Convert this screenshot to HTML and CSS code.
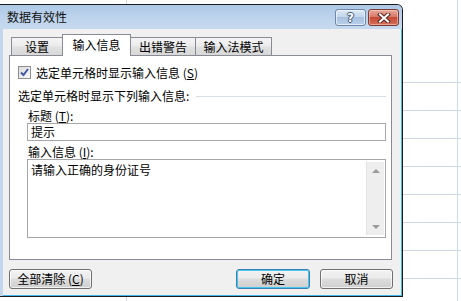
FILE: index.html
```html
<!DOCTYPE html>
<html lang="zh-CN">
<head>
<meta charset="utf-8">
<title>数据有效性</title>
<link rel="stylesheet" href="styles.css">
</head>
<body>
<div class="window">
  <div class="titlebar">
    <span class="title">数据有效性</span>
    <div class="caption-buttons">
      <span class="cap help"><span class="q">?</span></span>
      <span class="cap close">
        <svg width="14" height="10" viewBox="0 0 14 10">
          <path d="M3 1.5 L11 8.5 M11 1.5 L3 8.5" stroke="#5a2a24" stroke-width="4" stroke-linecap="square"/>
          <path d="M3 1.5 L11 8.5 M11 1.5 L3 8.5" stroke="#ffffff" stroke-width="2" stroke-linecap="square"/>
        </svg>
      </span>
    </div>
  </div>
  <div class="client">
    <div class="tabs">
      <div class="tab w1">设置</div>
      <div class="tab active w2">输入信息</div>
      <div class="tab w3">出错警告</div>
      <div class="tab w4">输入法模式</div>
    </div>
    <div class="panel">
      <div class="check-row">
        <span class="checkbox">
          <svg width="11" height="11" viewBox="0 0 11 11">
            <path d="M2 5.5 L4.5 8 L9 2" fill="none" stroke="#3d58a6" stroke-width="2"/>
          </svg>
        </span>
        <span>选定单元格时显示输入信息 (<u>S</u>)</span>
      </div>
      <div class="group-label"><span>选定单元格时显示下列输入信息:</span><span class="rule"></span></div>
      <div class="field-label">标题 (<u>T</u>):</div>
      <div class="input">提示</div>
      <div class="field-label second">输入信息 (<u>I</u>):</div>
      <div class="textarea">
        <div class="ta-text">请输入正确的身份证号</div>
        <div class="scrollbar">
          <span class="arrow up"></span>
          <span class="arrow down"></span>
        </div>
      </div>
    </div>
    <div class="buttons">
      <div class="btn clear">全部清除 (<u>C</u>)</div>
      <div class="spacer"></div>
      <div class="btn ok">确定</div>
      <div class="btn cancel">取消</div>
    </div>
  </div>
</div>
</body>
</html>
```
FILE: styles.css
```css
html, body {
  margin: 0;
  padding: 0;
}
body {
  width: 461px;
  height: 301px;
  overflow: hidden;
  font-family: "Noto Sans CJK SC", "Liberation Sans", sans-serif;
  font-size: 12px;
  color: #000;
  background-color: #fff;
  background-image:
    linear-gradient(to right, transparent 126px, #d0d7e5 126px, #d0d7e5 127px, transparent 127px, transparent 457px, #d0d7e5 457px, #d0d7e5 458px, transparent 458px),
    linear-gradient(to bottom, #fff 0, #fff 80px, transparent 80px),
    repeating-linear-gradient(to bottom, transparent 0, transparent 27px, #d0d7e5 27px, #d0d7e5 28px);
  background-position: 0 0, 0 0, 0 55px;
}
.window {
  margin-top: 4px;
  width: 402px;
  border: 1px solid #1c1c1c;
  border-left: 0;
  border-radius: 0 6px 0 0;
  background: #c2d7ee;
  overflow: hidden;
}
.titlebar {
  height: 24px;
  display: flex;
  align-items: flex-start;
  justify-content: space-between;
  background: linear-gradient(#aec8e6, #bcd3ec 50%, #c6daef);
}
.title {
  padding-left: 7px;
  line-height: 24px;
  font-size: 12px;
  color: #111;
}
.caption-buttons {
  display: flex;
  gap: 2px;
  margin-top: 4px;
  margin-right: 3px;
}
.cap {
  width: 31px;
  height: 17px;
  box-sizing: border-box;
  border-radius: 3px;
  display: flex;
  align-items: center;
  justify-content: center;
}
.help {
  border: 1px solid #6e86a8;
  background: linear-gradient(#dce8f5, #c4d6ec 45%, #a9c1e0 50%, #b9d0ea);
  box-shadow: inset 0 0 0 1px rgba(255,255,255,0.6);
}
.q {
  font-family: "DejaVu Sans", sans-serif;
  font-weight: bold;
  font-size: 12px;
  line-height: 12px;
  color: #fff;
  text-shadow: -1px 0 #3f5570, 1px 0 #3f5570, 0 -1px #3f5570, 0 1px #3f5570;
}
.close {
  border: 1px solid #7a3a32;
  background: linear-gradient(#e8a89a, #d77a68 45%, #c74a36 50%, #d3705a);
  box-shadow: inset 0 0 0 1px rgba(255,220,210,0.5);
}
.client {
  margin-left: 3px;
  background: #f0f0f0;
  border-right: 1px solid #43b8e8;
  border-bottom: 1px solid #43b8e8;
  padding: 5px 9px 6px 6px;
}
.tabs {
  display: flex;
  align-items: flex-end;
  padding-left: 2px;
  height: 21px;
  position: relative;
  z-index: 1;
}
.tab {
  box-sizing: border-box;
  height: 18px;
  border: 1px solid #898c95;
  border-bottom: 0;
  background: linear-gradient(#f4f4f4, #ececec 45%, #e0e0e0 55%, #d8d8d8);
  text-align: center;
  line-height: 17px;
}
.tab + .tab {
  margin-left: -1px;
}
.w1 { width: 52px; }
.w2 { width: 69px; }
.w3 { width: 66px; }
.w4 { width: 77px; }
.tab.active {
  height: 22px;
  margin-bottom: -1px;
  background: #fff;
  line-height: 20px;
  position: relative;
  z-index: 2;
}
.panel {
  box-sizing: border-box;
  height: 205px;
  border: 1px solid #898c95;
  background: #fff;
  padding: 10px 5px 0 8px;
}
.check-row {
  display: flex;
  align-items: center;
  gap: 5px;
  height: 13px;
}
.checkbox {
  box-sizing: border-box;
  width: 13px;
  height: 13px;
  border: 1px solid #8e8f8f;
  background: linear-gradient(135deg, #dcdcdc, #fafafa);
  display: flex;
  align-items: center;
  justify-content: center;
}
.group-label {
  margin-top: 10px;
  display: flex;
  align-items: center;
  height: 14px;
  line-height: 14px;
}
.rule {
  flex: 1;
  height: 1px;
  background: #d5dfe5;
  margin-left: 7px;
}
.field-label {
  margin-top: 6px;
  margin-left: 10px;
  height: 14px;
  line-height: 14px;
}
.field-label.second {
  margin-top: 4px;
}
.input {
  box-sizing: border-box;
  margin-left: 9px;
  height: 18px;
  border: 1px solid #a5a6aa;
  padding-left: 3px;
  line-height: 16px;
}
.textarea {
  box-sizing: border-box;
  margin-left: 9px;
  height: 79px;
  border: 1px solid #a5a6aa;
  display: flex;
  padding: 2px 1px 2px 3px;
}
.ta-text {
  flex: 1;
  line-height: 14px;
  padding-top: 1px;
}
.scrollbar {
  width: 17px;
  background: #eeeeee;
  border-left: 1px solid #e3e3e3;
  display: flex;
  flex-direction: column;
  justify-content: space-between;
  align-items: center;
  padding: 7px 0 6px;
}
.arrow {
  width: 0;
  height: 0;
  border-left: 4px solid transparent;
  border-right: 4px solid transparent;
}
.arrow.up {
  border-bottom: 4px solid #9a9a9a;
}
.arrow.down {
  border-top: 4px solid #9a9a9a;
}
.buttons {
  margin-top: 9px;
  margin-right: -1px;
  display: flex;
  gap: 10px;
}
.spacer {
  flex: 1;
}
.btn {
  box-sizing: border-box;
  height: 20px;
  border: 1px solid #707070;
  border-radius: 3px;
  background: linear-gradient(#f2f2f2, #ebebeb 45%, #dddddd 50%, #cfcfcf);
  box-shadow: inset 0 0 0 1px rgba(255,255,255,0.7);
  text-align: center;
  line-height: 18px;
}
.clear { width: 83px; }
.ok {
  width: 74px;
  border-color: #3c7fb1;
  box-shadow: inset 0 0 0 1px #48c6f0;
  background: linear-gradient(#f2f2f2, #ebebeb 45%, #dddddd 50%, #cfcfcf);
}
.cancel { width: 73px; }
```
